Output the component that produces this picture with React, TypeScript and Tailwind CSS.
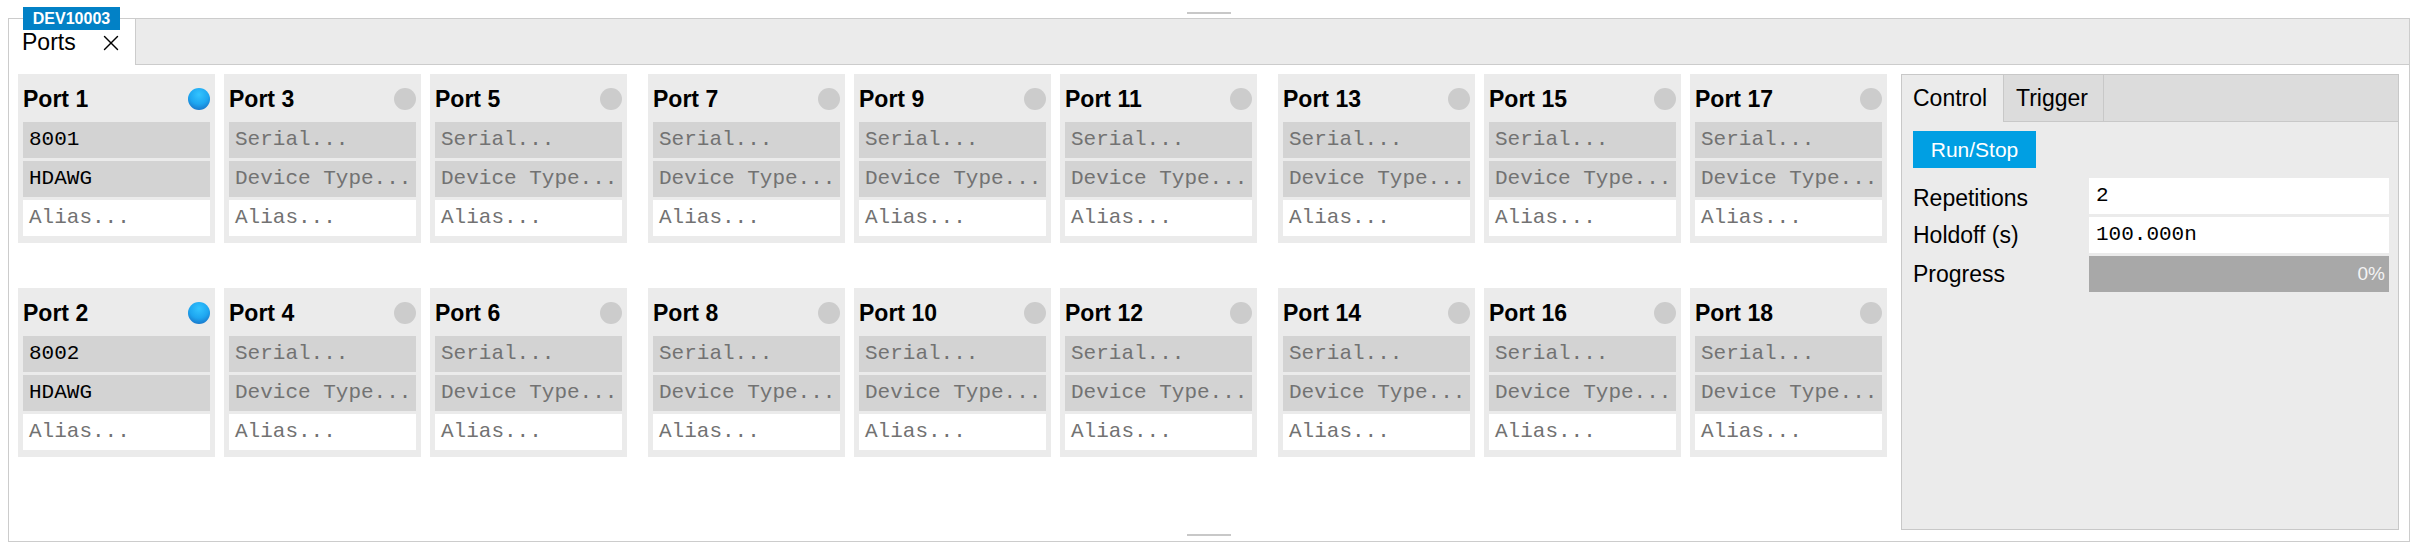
import { X } from 'lucide-react';

type PortInfo = {
  num: number;
  serial?: string;
  deviceType?: string;
};

const ports: Record<number, PortInfo> = {
  1: { num: 1, serial: '8001', deviceType: 'HDAWG' },
  2: { num: 2, serial: '8002', deviceType: 'HDAWG' },
};

function Field({ value, placeholder, white }: { value?: string; placeholder: string; white?: boolean }) {
  return (
    <div
      className={`flex h-[36px] items-center overflow-hidden whitespace-nowrap pl-[6px] font-['Liberation_Mono',monospace] text-[21px] ${
        white ? 'bg-white' : 'bg-[#d3d3d3]'
      } ${value ? 'text-black' : 'text-[#727272]'}`}
    >
      {value ?? placeholder}
    </div>
  );
}

function PortCard({ num }: { num: number }) {
  const info = ports[num];
  const connected = !!info;

  return (
    <div className="w-[197px] bg-[#ebebeb] px-[5px] pb-[7px]">
      <div className="flex h-[48px] items-center justify-between pt-[2px]">
        <span className="text-[23px] font-bold leading-none">Port {num}</span>
        {connected ? (
          <span className="h-[22px] w-[22px] rounded-full bg-[radial-gradient(circle_at_50%_30%,#33c4ff_0%,#1ea6f0_50%,#1660b8_100%)]" />
        ) : (
          <span className="h-[22px] w-[22px] rounded-full bg-[#cccccc]" />
        )}
      </div>
      <div className="flex flex-col gap-[3px]">
        <Field value={info?.serial} placeholder="Serial..." />
        <Field value={info?.deviceType} placeholder="Device Type..." />
        <Field placeholder="Alias..." white />
      </div>
    </div>
  );
}

function ControlPanel() {
  return (
    <div className="ml-[14px] flex h-[456px] w-[498px] flex-col border border-[#c8c8c8] bg-[#ebebeb]">
      <div className="flex h-[47px] shrink-0 bg-[#dcdcdc] text-[23px]">
        <div className="flex w-[102px] items-center border-r border-[#c8c8c8] bg-[#ebebeb] pl-[11px]">Control</div>
        <div className="flex w-[100px] items-center border-r border-b border-[#c8c8c8] pl-[12px]">Trigger</div>
        <div className="flex-1 border-b border-[#c8c8c8]" />
      </div>
      <div className="flex flex-col pt-[9px] pr-[9px] pl-[11px]">
        <button className="h-[37px] w-[123px] bg-[#009fe3] text-[21px] text-white">Run/Stop</button>
        <div className="mt-[10px] grid grid-cols-[176px_1fr] gap-y-[3px] text-[23px]">
          <div className="flex h-[36px] items-center pt-[4px]">Repetitions</div>
          <div className="flex h-[36px] items-center bg-white pl-[7px] font-['Liberation_Mono',monospace] text-[21px]">2</div>
          <div className="flex h-[36px] items-center">Holdoff (s)</div>
          <div className="flex h-[36px] items-center bg-white pl-[7px] font-['Liberation_Mono',monospace] text-[21px]">
            100.000n
          </div>
          <div className="flex h-[36px] items-center">Progress</div>
          <div className="flex h-[36px] items-center justify-end bg-[#a8a8a8] pr-[4px] text-[19px] text-[#f4f4f4]">0%</div>
        </div>
      </div>
    </div>
  );
}

export default function App() {
  const groups = [
    [0, 1, 2],
    [3, 4, 5],
    [6, 7, 8],
  ];

  return (
    <div className="relative h-[550px] w-[2420px] bg-white font-['Liberation_Sans',Arial,sans-serif] text-black">
      <div className="absolute top-[12px] left-[1187px] h-[2px] w-[44px] bg-[#c8c8c8]" />
      <div className="absolute top-[534px] left-[1187px] h-[2px] w-[44px] bg-[#c8c8c8]" />

      <div className="pt-[18px] pr-[10px] pl-[8px]">
        <div className="relative flex h-[524px] flex-col border border-[#cccccc]">
          <div className="absolute -top-[12px] left-[14px] flex h-[23px] w-[97px] items-center justify-center bg-[#0281c6] text-[16px] font-bold text-white">
            DEV10003
          </div>

          <div className="flex h-[46px] shrink-0">
            <div className="flex w-[127px] items-center border-r border-[#cccccc] bg-white pt-[1px] pl-[13px] text-[23px]">
              <span>Ports</span>
              <X className="ml-[22px] h-[26px] w-[26px]" strokeWidth={1.3} />
            </div>
            <div className="flex-1 border-b border-[#cccccc] bg-[#ebebeb]" />
          </div>

          <div className="flex pt-[9px] pl-[9px]">
            <div className="flex gap-[21px]">
              {groups.map((cols, gi) => (
                <div key={gi} className="flex gap-[9px]">
                  {cols.map((c) => (
                    <div key={c} className="flex flex-col gap-[45px]">
                      <PortCard num={c * 2 + 1} />
                      <PortCard num={c * 2 + 2} />
                    </div>
                  ))}
                </div>
              ))}
            </div>
            <ControlPanel />
          </div>
        </div>
      </div>
    </div>
  );
}
